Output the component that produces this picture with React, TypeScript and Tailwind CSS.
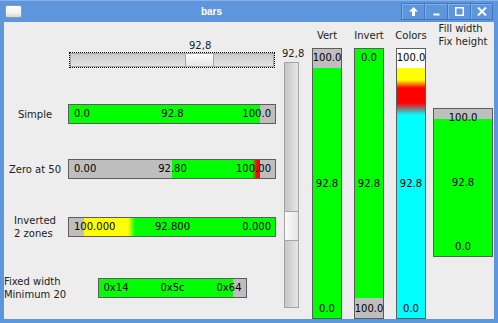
import { ReactNode } from "react"

type RowProps = {
  label: ReactNode
  mt: string
  children: ReactNode
}

type HBarProps = {
  w: string
  bg: string
  left: string
  mid: string
  right: string
}

type VColProps = {
  title: string
  children: ReactNode
}

type VBarProps = {
  bg: string
  top: string
  mid: string
  bottom: string
  className?: string
}

const TitleButton = ({ children, last }: { children: ReactNode; last?: boolean }) => (
  <div
    className={`flex h-[17px] w-[23px] items-center justify-center border-y border-l border-[#4677bd] shadow-[inset_1px_1px_0_#82b1ea] ${last ? "border-r" : ""}`}
  >
    {children}
  </div>
)

const TitleBar = () => (
  <div className="flex h-[22px] items-center border-t border-[#86b2ea]">
    <div className="ml-[5px] h-[13px] w-[17px] rounded-[2px] border border-[#8b9cb3] bg-[linear-gradient(to_bottom,#ffffff,#f2f2f2_60%,#d6d6d6)]" />
    <div className="flex-1 text-center font-['Liberation_Sans',sans-serif] text-[10px] font-bold text-white">bars</div>
    <div className="mr-[5px] flex">
      <TitleButton>
        <svg width="9" height="9" viewBox="0 0 9 9">
          <path d="M4.5 0 L9 4.5 L6 4.5 L6 9 L3 9 L3 4.5 L0 4.5 Z" fill="white" />
        </svg>
      </TitleButton>
      <TitleButton>
        <svg width="9" height="9" viewBox="0 0 9 9">
          <rect x="1.5" y="6.5" width="6" height="2" fill="white" />
        </svg>
      </TitleButton>
      <TitleButton>
        <svg width="9" height="9" viewBox="0 0 9 9">
          <rect x="0.75" y="0.75" width="7.5" height="7.5" fill="none" stroke="white" strokeWidth="1.5" />
        </svg>
      </TitleButton>
      <TitleButton last>
        <svg width="10" height="9" viewBox="0 0 10 9">
          <path d="M1 0.5 L9 8.5 M9 0.5 L1 8.5" stroke="white" strokeWidth="2" />
        </svg>
      </TitleButton>
    </div>
  </div>
)

const Row = ({ label, mt, children }: RowProps) => (
  <div className={`flex h-[20px] items-center ${mt}`}>
    <div className="flex w-[62px] justify-center whitespace-nowrap leading-[13px] text-[#222]">{label}</div>
    <div className="ml-[2px] flex w-[208px] justify-center">{children}</div>
  </div>
)

const HBar = ({ w, bg, left, mid, right }: HBarProps) => (
  <div className={`grid h-[20px] grid-cols-[1fr_auto_1fr] items-center border border-[#5c5c5c] pl-[5px] pr-[4px] leading-[18px] ${w} ${bg}`}>
    <span className="text-left">{left}</span>
    <span>{mid}</span>
    <span className="text-right">{right}</span>
  </div>
)

const VCol = ({ title, children }: VColProps) => (
  <div className="flex w-[30px] flex-col items-center pt-[8px]">
    <div className="h-[12px] whitespace-nowrap text-[#222]">{title}</div>
    <div className="mt-[6px] w-full flex-1">{children}</div>
  </div>
)

const VBar = ({ bg, top, mid, bottom, className = "h-full" }: VBarProps) => (
  <div className={`flex w-full flex-col items-center justify-between border border-[#5c5c5c] pb-[3px] pt-[3px] ${bg} ${className}`}>
    <span>{top}</span>
    <span>{mid}</span>
    <span>{bottom}</span>
  </div>
)

const App = () => (
  <div className="flex h-[323px] w-[498px] flex-col bg-[#5d96dd] font-['DejaVu_Sans',sans-serif]">
    <TitleBar />

    <div className="mx-[4px] mb-[4px] flex flex-1 bg-[#ededed] text-[10px] leading-[12px] text-black">

      <div className="flex w-[278px] flex-col">
        <div className="mt-[18px] h-[12px] pl-[185px] text-[#222]">92,8</div>
        <div className="ml-[65px] h-[16px] w-[206px] border border-dotted border-black">
          <div className="flex h-full border border-[#a3a3a3] bg-[linear-gradient(to_bottom,#cbcbcb,#e4e4e4)] pl-[114px]">
            <div className="h-full w-[29px] border-x border-[#a3a3a3] bg-[linear-gradient(to_bottom,#fbfbfb,#e7e7e7)]" />
          </div>
        </div>

        <Row label="Simple" mt="mt-[36px]">
          <HBar
            w="w-[208px]"
            bg="bg-[linear-gradient(to_right,#00ff00_191px,#bebebe_191px)]"
            left="0.0"
            mid="92.8"
            right="100.0"
          />
        </Row>

        <Row label="Zero at 50" mt="mt-[35px]">
          <HBar
            w="w-[208px]"
            bg="bg-[linear-gradient(to_right,#bebebe_103px,#00ff00_103px,#00ff00_183px,#ff0000_188px,#ff0000_191px,#bebebe_191px)]"
            left="0.00"
            mid="92.80"
            right="100.00"
          />
        </Row>

        <Row label={<div className="text-left">Inverted<br />2 zones</div>} mt="mt-[38px]">
          <HBar
            w="w-[208px]"
            bg="bg-[linear-gradient(to_right,#bebebe_15px,#ffff00_15px,#ffff00_59px,#00ff00_66px)]"
            left="100.000"
            mid="92.800"
            right="0.000"
          />
        </Row>

        <Row label={<div className="text-left">Fixed width<br />Minimum 20</div>} mt="mt-[41px]">
          <HBar
            w="w-[149px]"
            bg="bg-[linear-gradient(to_right,#00ff00_134px,#bebebe_134px)]"
            left="0x14"
            mid="0x5c"
            right="0x64"
          />
        </Row>
      </div>

      <div className="flex">
        <div className="flex w-[30px] flex-col pt-[26px]">
          <div className="h-[12px] text-[#222]">92,8</div>
          <div className="ml-[2px] mt-[2px] h-[246px] w-[15px] border border-[#a3a3a3] bg-[linear-gradient(to_right,#c6c6c6,#e6e6e6)] pt-[148px]">
            <div className="h-[30px] border-y border-[#a3a3a3] bg-[linear-gradient(to_right,#fbfbfb,#e6e6e6)]" />
          </div>
        </div>

        <VCol title="Vert">
          <VBar bg="bg-[linear-gradient(to_bottom,#bebebe_19px,#00ff00_19px)]" top="100.0" mid="92.8" bottom="0.0" />
        </VCol>

        <div className="w-[12px]" />

        <VCol title="Invert">
          <VBar bg="bg-[linear-gradient(to_top,#bebebe_20px,#00ff00_20px)]" top="0.0" mid="92.8" bottom="100.0" />
        </VCol>

        <div className="w-[12px]" />

        <VCol title="Colors">
          <VBar
            bg="bg-[linear-gradient(to_bottom,#ffffff_19px,#ffff00_19px,#ffff00_31px,#ff0000_39px,#ff0000_54px,#00ffff_66px)]"
            top="100.0"
            mid="92.8"
            bottom="0.0"
          />
        </VCol>

        <div className="w-[7px]" />

        <div className="flex w-[60px] flex-col items-center">
          <div className="h-[26px] whitespace-nowrap text-left leading-[13px] text-[#222]">
            Fill width<br />Fix height
          </div>
          <VBar
            className="mt-[60px] h-[149px]"
            bg="bg-[linear-gradient(to_bottom,#bebebe_10px,#00ff00_10px)]"
            top="100.0"
            mid="92.8"
            bottom="0.0"
          />
        </div>
      </div>
    </div>
  </div>
)

export default App
